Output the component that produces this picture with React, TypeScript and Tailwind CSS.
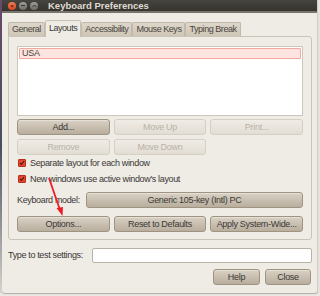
import React from "react";

const font = { fontFamily: '"Liberation Sans", Arial, sans-serif' };

function Btn({
  label,
  disabled = false,
  className = "",
}: {
  label: string;
  disabled?: boolean;
  className?: string;
}) {
  return (
    <div
      className={`h-[16px] flex items-center justify-center rounded-[3px] border text-[9px] tracking-[-0.3px] leading-none ${
        disabled
          ? "bg-gradient-to-b from-[#f0ece6] to-[#e2ddd4] border-[#d6cfc4] text-[#b9b2a7]"
          : "bg-gradient-to-b from-[#d9d1c4] to-[#b9ae9e] border-[#9f9482] text-[#3a3835] shadow-[inset_0_1px_0_rgba(255,255,255,0.35)]"
      } ${className}`}
    >
      {label}
    </div>
  );
}

function Check({ label }: { label: string }) {
  return (
    <div className="h-[12px] flex items-center gap-[4px]">
      <div className="ml-[1px] w-[8px] h-[8px] rounded-[1px] bg-[#e4472f] border border-[#b3321f] flex items-center justify-center">
        <svg width="6" height="6" viewBox="0 0 6 6">
          <path d="M1 3 L2.5 4.5 L5 1.2" fill="none" stroke="#5a1208" strokeWidth="1.1" />
        </svg>
      </div>
      <span className="text-[9px] tracking-[-0.35px] text-[#3a3835] leading-none">{label}</span>
    </div>
  );
}

const tabs = ["General", "Layouts", "Accessibility", "Mouse Keys", "Typing Break"];

export default function App() {
  return (
    <div className="w-[320px] h-[296px] bg-[#ebe8e3] relative overflow-hidden" style={font}>
      <div className="flex h-[293px]">
        <div className="w-[2px] bg-gradient-to-b from-[#6a4a6a] via-[#4a5060] to-[#d9d6d0]" />
        <div className="w-[316px] flex flex-col bg-[#efebe5] border-r border-[#d2ccc2] rounded-b-[3px] shadow-[0_1px_1px_rgba(0,0,0,0.25)]">
          {/* title bar */}
          <div className="h-[13px] bg-gradient-to-b from-[#45443f] to-[#35342f] border-b-2 border-[#77746d] flex items-center">
            <div className="flex items-center gap-[3px] pl-[6px]">
              <div className="w-[8px] h-[8px] rounded-full bg-gradient-to-b from-[#f47a4f] to-[#d9461f] flex items-center justify-center text-[6px] leading-none text-[#3b2418] font-bold">
                ×
              </div>
              <div className="w-[8px] h-[8px] rounded-full bg-gradient-to-b from-[#a09d96] to-[#6e6b65] flex items-center justify-center">
                <div className="w-[4px] h-[1px] bg-[#38372f]" />
              </div>
              <div className="w-[8px] h-[8px] rounded-full bg-gradient-to-b from-[#a09d96] to-[#6e6b65] flex items-center justify-center">
                <svg width="5" height="4" viewBox="0 0 5 4">
                  <path d="M0.5 3 L2.5 1 L4.5 3" fill="none" stroke="#38372f" strokeWidth="1" />
                </svg>
              </div>
            </div>
            <span className="ml-[10px] text-[9.5px] font-bold text-[#dfdbd2] leading-none">Keyboard Preferences</span>
          </div>

          {/* body */}
          <div className="flex-1 flex flex-col pl-[6px] pr-[5px]">
            <div className="mt-[7px] flex items-end h-[16px] relative z-10">
              {tabs.map((t) =>
                t === "Layouts" ? (
                  <div
                    key={t}
                    className="h-[17px] -mb-px px-[3px] flex items-center bg-[#efebe5] border border-b-0 border-[#c9c1b3] rounded-t-[2px] text-[9px] tracking-[-0.45px] text-[#3a3835]"
                  >
                    {t}
                  </div>
                ) : (
                  <div
                    key={t}
                    className="h-[14px] px-[3px] flex items-center bg-gradient-to-b from-[#ddd6ca] to-[#cfc6b7] border border-b-0 border-[#c2b9aa] rounded-t-[2px] text-[9px] tracking-[-0.45px] text-[#4a4640]"
                  >
                    {t}
                  </div>
                )
              )}
            </div>

            <div className="border border-[#cbc4b8] rounded-[3px] rounded-tl-none px-[8px] pt-[9px] pb-[7px] flex flex-col">
              <div className="h-[70px] bg-white border border-[#cdc6ba] p-px">
                <div className="h-[11px] bg-[#fde4e0] border border-[#f3a69c] rounded-[1px] flex items-center pl-[2px] text-[9px] tracking-[-0.3px] text-[#4a4640]">
                  USA
                </div>
              </div>

              <div className="mt-[3px] grid grid-cols-3 gap-x-[4px] gap-y-[4px]">
                <Btn label="Add..." />
                <Btn label="Move Up" disabled />
                <Btn label="Print..." disabled />
                <Btn label="Remove" disabled />
                <Btn label="Move Down" disabled />
              </div>

              <div className="mt-[2px]">
                <Check label="Separate layout for each window" />
              </div>
              <div className="mt-[4px]">
                <Check label="New windows use active window's layout" />
              </div>

              <div className="mt-[7px] flex items-center">
                <span className="w-[69px] text-[9px] tracking-[-0.35px] text-[#3a3835] leading-none">Keyboard model:</span>
                <Btn label="Generic 105-key (Intl) PC" className="flex-1" />
              </div>

              <div className="mt-[8px] grid grid-cols-3 gap-x-[4px]">
                <Btn label="Options..." />
                <Btn label="Reset to Defaults" />
                <Btn label="Apply System-Wide..." />
              </div>
            </div>

            <div className="mt-[8px] flex items-center">
              <span className="w-[84px] text-[9px] tracking-[-0.35px] text-[#3a3835] leading-none">Type to test settings:</span>
              <div className="flex-1 h-[15px] bg-white border border-[#b9b2a6] rounded-[2px]" />
            </div>

            <div className="mt-[6px] pr-px flex justify-end gap-[5px]">
              <Btn label="Help" className="w-[47px]" />
              <Btn label="Close" className="w-[46px]" />
            </div>
          </div>
        </div>
        <div className="w-[2px] bg-[#e6e3de]" />
      </div>

      {/* annotation arrow */}
      <svg className="absolute left-0 top-0 pointer-events-none" width="320" height="296">
        <line x1="49" y1="178" x2="60" y2="210" stroke="#ec1c24" strokeWidth="1.8" />
        <polygon points="62.5,216 56.5,208 63,207" fill="#ec1c24" />
      </svg>
    </div>
  );
}
